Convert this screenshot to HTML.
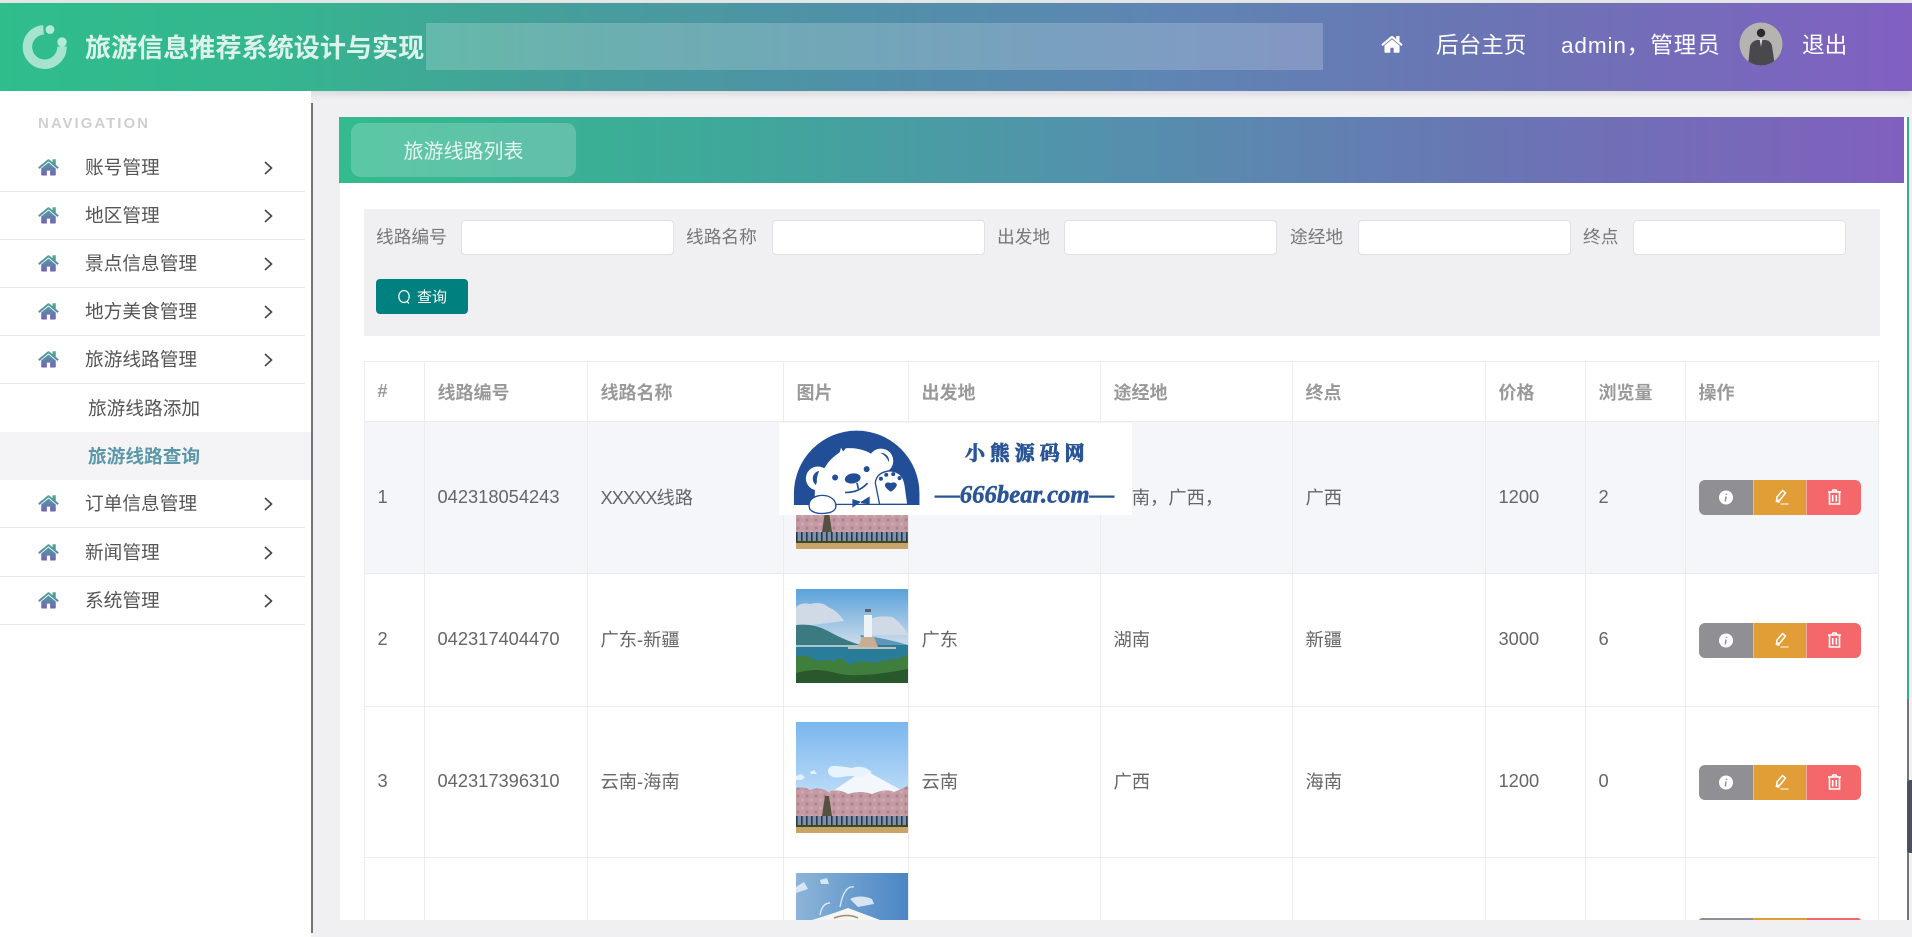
<!DOCTYPE html>
<html lang="zh-CN"><head><meta charset="utf-8"><title>旅游线路列表</title>
<style>
*{box-sizing:border-box}
html,body{margin:0;padding:0;width:1912px;height:937px;overflow:hidden;background:#f0f0f3;font-family:"Liberation Sans","Noto Sans CJK SC",sans-serif;color:#666}
.abs{position:absolute}
#hdr{position:absolute;left:0;top:3px;width:1912px;height:88px;background:linear-gradient(90deg,#2fbd8c 0%,#35b58f 15%,#45a09a 28%,#5090a8 45%,#5f84b4 62%,#6b74b4 78%,#8160c2 100%);box-shadow:0 3px 8px rgba(0,0,0,.1)}
#topline{position:absolute;left:0;top:0;width:1912px;height:3px;background:#e6e9e8}
#search{position:absolute;left:426px;top:23px;width:897px;height:47px;background:rgba(255,255,255,.2)}
.title{position:absolute;left:85px;top:30px;font-size:26.1px;line-height:36px;font-weight:700;color:#dcf3ec;white-space:nowrap}
.nav{position:absolute;top:28px;line-height:36px;font-size:22.6px;color:#fff;white-space:nowrap}
#side{position:absolute;left:0;top:91px;width:311px;height:846px;background:#fff}
#vline{position:absolute;left:311px;top:103px;width:2px;height:830px;background:#747478}
.navt{position:absolute;left:38px;top:116px;font-size:15px;line-height:16px;font-weight:700;letter-spacing:2px;color:#cfcfd2}
.mi{position:absolute;left:0;width:305px;height:48px;border-bottom:1px solid #e9e9ec;font-size:18.7px;line-height:48px;color:#555}
.mi span{position:absolute;left:85px;top:0;white-space:nowrap}
.mi svg.h{position:absolute;left:38px;top:15px}
.mi svg.c{position:absolute;left:264px;top:17px}
.sub{position:absolute;left:0;width:311px;height:48px;font-size:18.7px;line-height:48px;color:#555}
.sub span{position:absolute;left:88px;white-space:nowrap}
.sub.on{background:#f4f4f7;color:#5b97a9;font-weight:700;line-height:50px}
#card{position:absolute;left:340px;top:117px;width:1567px;height:803px;background:#fff;overflow:hidden}
#chead{position:absolute;left:339px;top:117px;width:1565px;height:66px;background:linear-gradient(90deg,#33bb8e 0%,#3fa89a 25%,#5490ad 50%,#6b74b4 75%,#8060be 100%)}
#tab{position:absolute;left:351px;top:123px;width:225px;height:54px;border-radius:10px;background:rgba(255,255,255,.2);color:#e4f6f0;font-size:20px;line-height:54px;text-align:center}
#tab span{position:relative;top:2px}
#green{position:absolute;left:1907px;top:117px;width:2px;height:582px;background:#35ad8a}
#gray{position:absolute;left:1907px;top:699px;width:2px;height:221px;background:#747478}
#thumb{position:absolute;left:1907px;top:780px;width:5px;height:73px;background:#4b5060;border-radius:3px 0 0 3px}
#filter{position:absolute;left:364px;top:209px;width:1516px;height:127px;background:#f0f0f2}
.lab{position:absolute;top:223px;font-size:17.7px;line-height:28px;color:#777;white-space:nowrap}
.inp{position:absolute;top:220px;width:213px;height:35px;background:#fff;border:1px solid #e0e0e4;border-radius:4px}
#btn{position:absolute;left:376px;top:279px;width:92px;height:35px;border-radius:4px;background:#00807f;color:#fff;font-size:15px;line-height:35px}
#btn span{position:absolute;left:41px;top:1px;white-space:nowrap}
#btn svg{position:absolute;left:21px;top:11px}
#twrap{position:absolute;left:364px;top:361px;width:1516px;height:559px;overflow:hidden}
table{border-collapse:collapse;table-layout:fixed;width:1514px;font-size:18.3px;color:#666}
th,td{border:1px solid #ececf0;padding:0 0 2px 12.5px;text-align:left;vertical-align:middle;white-space:nowrap}
th{height:60px;font-weight:700;color:#999;font-size:18px;padding:0 0 0 12.5px}
tr.r1 td{background:#f5f6fa}
td.img{padding-left:12px;padding-bottom:0;vertical-align:top}
td.img svg{display:block;margin-top:15px}
tr.r1 td.img svg{margin-top:16px}
.ops{display:flex;width:162px;height:35px;border-radius:6px;overflow:hidden;position:relative;top:1px}
.ops i{display:block;height:35px;position:relative}
.ops svg{position:absolute;left:0;top:0}
.o1{width:54px;background:#909094}.o2{width:54px;background:#e29e36;border-left:1px solid #eebd6e;border-right:1px solid #f5a8a0}.o3{width:54px;background:#f4686c}
tr.last td{height:63px;border-bottom:none;vertical-align:top;padding:0 0 0 12.5px}
tr.last td.img{padding-left:12px}
.opstop{display:flex;width:162px;height:3px;margin-top:60px;border-radius:6px 6px 0 0;overflow:hidden}
.opstop b{display:block;width:54px;height:3px}
#bottom{position:absolute;left:313px;top:920px;width:1599px;height:17px;background:#f0f0f3}
#wm{position:absolute;left:779px;top:423px;width:353px;height:92px;background:#fff}
</style></head><body>
<svg width="0" height="0" style="position:absolute"><defs>
<linearGradient id="hg" x1="0" y1="0" x2="0" y2="1"><stop offset="0" stop-color="#4aaa98"/><stop offset="1" stop-color="#7165b6"/></linearGradient>
<symbol id="home" viewBox="0 256 1664 1300"><path d="M1408 992v480q0 26-19 45t-45 19h-384v-384h-256v384h-384q-26 0-45-19t-19-45v-480q0-1 .5-3t.5-3l575-474 575 474q1 2 1 6zm223-69l-62 74q-8 9-21 11h-3q-13 0-21-7l-692-577-692 577q-12 8-24 7-13-2-21-11l-62-74q-8-10-7-23.500t11-21.500l719-599q32-26 76-26t76 26l244 204v-195q0-14 9-23t23-9h192q14 0 23 9t9 23v408l219 182q10 8 11 21.500t-7 23.500z"/></symbol>
<symbol id="chev" viewBox="0 0 9 14"><path d="M1 1l6.500 6-6.500 6" fill="none" stroke="#444" stroke-width="1.6"/></symbol>
<linearGradient id="sky1" x1="0" y1="0" x2="0" y2="1"><stop offset="0" stop-color="#7ab6ee"/><stop offset=".7" stop-color="#c0def8"/></linearGradient>
<linearGradient id="sky2" x1="0" y1="0" x2="0" y2="1"><stop offset="0" stop-color="#5aa2dc"/><stop offset=".55" stop-color="#c4d8e8"/></linearGradient>
<linearGradient id="sky3" x1="0" y1="0" x2="1" y2="0"><stop offset="0" stop-color="#8cb4d8"/><stop offset="1" stop-color="#4a86c4"/></linearGradient>
<pattern id="blot" width="9" height="8" patternUnits="userSpaceOnUse"><circle cx="2" cy="2" r="1.600" fill="#7e5e60" opacity=".35"/><circle cx="6.500" cy="6" r="1.300" fill="#e6c4cc" opacity=".45"/></pattern>
<pattern id="trunk" width="5" height="10" patternUnits="userSpaceOnUse"><rect width="5" height="10" fill="#7f90aa"/><rect width="1.600" height="10" fill="#26384a"/></pattern>
<symbol id="fuji" viewBox="0 0 112 111">
<rect width="112" height="111" fill="url(#sky1)"/>
<path d="M37 69L62 52Q70 46 76 52L107 69V76H37z" fill="#f3f6fb"/>
<path d="M32 50q0-7 8-6 10 1 16 2 10-4 20 4l-12 5q-10-2-18 0-12 2-14-5z" fill="#e9f3fc"/>
<path d="M0 54l5-2 4 3-3 3H0zM14 50l4-2 3 4h-6z" fill="#e4f0fb"/>
<path d="M20 72h92v8H20z" fill="#9eaacb" opacity=".7"/>
<path d="M0 66q8-2 14 2 10-4 18 2 10-4 20 2 12-4 24 0 14-6 22-2l14-6v40H0z" fill="#c49aa4"/>
<path d="M0 66q8-2 14 2 10-4 18 2 10-4 20 2 12-4 24 0 14-6 22-2l14-6v40H0z" fill="url(#blot)"/>
<path d="M26 94l3-20h4l3 20z" fill="#55503f"/>
<rect y="94" width="112" height="9" fill="url(#trunk)"/><rect y="103" width="112" height="2" fill="#3c4a1c"/>
<rect y="105" width="112" height="6" fill="#c9a468"/></symbol>
<symbol id="tower" viewBox="0 0 112 94">
<rect width="112" height="94" fill="url(#sky2)"/>
<path d="M0 18q6-5 14-3 12-3 18 3 10 4 16 14l-48 6zM74 30q10-4 22-2 10 6 16 18H74z" fill="#cfdae6"/>
<path d="M0 36q18-2 32 6t32 14H0z" fill="#3b7a80"/><path d="M64 46q20 2 48 10v2H70z" fill="#5d97bb"/>
<rect y="56" width="112" height="24" fill="#2a7d9a"/><rect y="56" width="70" height="2" fill="#a8c4cc"/>
<path d="M68 26h8v22h-8z" fill="#eef3f5"/><path d="M69 23h6v-3h-6z" fill="#5a5f6a"/><path d="M62 58l4-10h12l4 10z" fill="#c9ad92"/><path d="M52 58h48v2H52z" fill="#c3c1b6"/>
<path d="M0 68q10-4 20 4 10-2 18 0 8-6 14 4 14-6 26-2 14-4 24-4 6-4 10-4v32H0z" fill="#3f7e3c"/><path d="M0 84q20-6 40 0t72-4v14H0z" fill="#28582c"/></symbol>
<symbol id="tent" viewBox="0 0 112 47">
<rect width="112" height="47" fill="url(#sky3)"/>
<path d="M54 26q10-5 22 0l2 5-16 3zM0 14l8-5 4 7-12 4zM24 7l7-2 2 6h-8z" fill="#d7e6f2"/>
<path d="M24 42q2-12 10-12M44 34q4-22 14-20" fill="none" stroke="#d6e8f4" stroke-width="1.400"/>
<path d="M16 47Q36 41 52 35Q68 41 84 47z" fill="#f6f6f2"/><path d="M38 45q14-5 24 0" stroke="#a58878" stroke-width="1.500" fill="none"/></symbol>
<symbol id="info" viewBox="0 0 54 35"><circle cx="27" cy="17.500" r="7" fill="#fff"/><path d="M27.500 13.600v1.300M27 16.500l-.7 5" stroke="#909094" stroke-width="1.500" fill="none"/></symbol>
<symbol id="pen" viewBox="0 0 54 35"><path d="M23 17l5.500-6.500 3 2.500-5.500 7-3.500 1z" fill="none" stroke="#fff" stroke-width="1.500"/><path d="M22 21l3.500 1" stroke="#fff" stroke-width="2"/><path d="M26.500 24h8" stroke="#fff" stroke-width="1"/></symbol>
<symbol id="del" viewBox="0 0 54 35"><path d="M21 12h13M25 12l1-2h3l1 2M22.500 12.500v11.500h10v-11.500M25.700 15v6.500M29.300 15v6.500" fill="none" stroke="#fff" stroke-width="1.600"/></symbol>
</defs></svg>

<div id="topline"></div>
<div id="hdr"></div>
<div id="search"></div>
<svg class="abs" style="left:0;top:0" width="90" height="91"><path d="M62 46.500A17.300 17.300 0 1 1 43.500 29.700" fill="none" stroke="#a6e4cf" stroke-width="9.500"/><circle cx="62" cy="42" r="4.700" fill="#b4ead8"/><circle cx="50" cy="29.500" r="4.400" fill="#b4ead8"/></svg>
<div class="title">旅游信息推荐系统设计与实现</div>
<svg class="abs" style="left:1381px;top:36px" width="22" height="17" fill="#fff"><use href="#home"/></svg>
<div class="nav" style="left:1436px">后台主页</div>
<div class="nav" style="left:1561px;letter-spacing:.85px">admin，管理员</div>
<svg class="abs" style="left:1739px;top:22px" width="44" height="44" viewBox="0 0 44 44"><defs><clipPath id="av"><circle cx="22" cy="22" r="21.500"/></clipPath></defs><g clip-path="url(#av)"><rect width="44" height="44" fill="#b6b4b1"/><path d="M9 44l2-20q2-5 7-6h9q5 1 6 6l3 20z" fill="#49484c"/><circle cx="22" cy="11" r="4.200" fill="#2c2a2a"/><path d="M20.500 17h3l-1.500 8z" fill="#d8d6d2"/></g></svg>
<div class="nav" style="left:1802px">退出</div>

<div id="side"></div>
<div id="vline"></div>
<div class="navt">NAVIGATION</div>
<div class="mi" style="top:144px"><svg class="h" width="21" height="17" fill="url(#hg)"><use href="#home"/></svg><span>账号管理</span><svg class="c" width="9" height="14"><use href="#chev"/></svg></div>
<div class="mi" style="top:192px"><svg class="h" width="21" height="17" fill="url(#hg)"><use href="#home"/></svg><span>地区管理</span><svg class="c" width="9" height="14"><use href="#chev"/></svg></div>
<div class="mi" style="top:240px"><svg class="h" width="21" height="17" fill="url(#hg)"><use href="#home"/></svg><span>景点信息管理</span><svg class="c" width="9" height="14"><use href="#chev"/></svg></div>
<div class="mi" style="top:288px"><svg class="h" width="21" height="17" fill="url(#hg)"><use href="#home"/></svg><span>地方美食管理</span><svg class="c" width="9" height="14"><use href="#chev"/></svg></div>
<div class="mi" style="top:336px"><svg class="h" width="21" height="17" fill="url(#hg)"><use href="#home"/></svg><span>旅游线路管理</span><svg class="c" width="9" height="14"><use href="#chev"/></svg></div>
<div class="sub" style="top:385px"><span>旅游线路添加</span></div>
<div class="sub on" style="top:432px"><span>旅游线路查询</span></div>
<div class="mi" style="top:480px"><svg class="h" width="21" height="17" fill="url(#hg)"><use href="#home"/></svg><span>订单信息管理</span><svg class="c" width="9" height="14"><use href="#chev"/></svg></div>
<div class="mi" style="top:529px"><svg class="h" width="21" height="17" fill="url(#hg)"><use href="#home"/></svg><span>新闻管理</span><svg class="c" width="9" height="14"><use href="#chev"/></svg></div>
<div class="mi" style="top:577px"><svg class="h" width="21" height="17" fill="url(#hg)"><use href="#home"/></svg><span>系统管理</span><svg class="c" width="9" height="14"><use href="#chev"/></svg></div>

<div id="card"></div>
<div id="chead"></div>
<div id="tab"><span>旅游线路列表</span></div>
<div id="filter"></div>
<div class="lab" style="left:376px">线路编号</div><div class="inp" style="left:461px"></div>
<div class="lab" style="left:686px">线路名称</div><div class="inp" style="left:772px"></div>
<div class="lab" style="left:997px">出发地</div><div class="inp" style="left:1064px"></div>
<div class="lab" style="left:1290px">途经地</div><div class="inp" style="left:1358px"></div>
<div class="lab" style="left:1583px">终点</div><div class="inp" style="left:1633px"></div>
<div id="btn"><svg width="15" height="15" viewBox="0 0 15 15"><ellipse cx="7" cy="6.500" rx="5.200" ry="6" fill="none" stroke="#fff" stroke-width="1.200"/><path d="M10 11.500l2 2" stroke="#fff" stroke-width="1.200"/></svg><span>查询</span></div>

<div id="twrap"><table>
<colgroup><col style="width:60px"><col style="width:163px"><col style="width:196px"><col style="width:125px"><col style="width:192px"><col style="width:192px"><col style="width:193px"><col style="width:100px"><col style="width:100px"><col style="width:193px"></colgroup>
<tr><th>#</th><th>线路编号</th><th>线路名称</th><th>图片</th><th>出发地</th><th>途经地</th><th>终点</th><th>价格</th><th>浏览量</th><th>操作</th></tr>
<tr class="r1" style="height:152px"><td>1</td><td>042318054243</td><td><span style="letter-spacing:-1px">XXXXX</span>线路</td><td class="img"><svg width="112" height="111"><use href="#fuji"/></svg></td><td>云南</td><td>湖南，广西，</td><td>广西</td><td>1200</td><td>2</td><td><div class="ops"><i class="o1"><svg width="54" height="35"><use href="#info"/></svg></i><i class="o2"><svg width="54" height="35"><use href="#pen"/></svg></i><i class="o3"><svg width="54" height="35"><use href="#del"/></svg></i></div></td></tr>
<tr style="height:133px"><td>2</td><td>042317404470</td><td>广东-新疆</td><td class="img"><svg width="112" height="94"><use href="#tower"/></svg></td><td>广东</td><td>湖南</td><td>新疆</td><td>3000</td><td>6</td><td><div class="ops"><i class="o1"><svg width="54" height="35"><use href="#info"/></svg></i><i class="o2"><svg width="54" height="35"><use href="#pen"/></svg></i><i class="o3"><svg width="54" height="35"><use href="#del"/></svg></i></div></td></tr>
<tr style="height:151px"><td>3</td><td>042317396310</td><td>云南-海南</td><td class="img"><svg width="112" height="111"><use href="#fuji"/></svg></td><td>云南</td><td>广西</td><td>海南</td><td>1200</td><td>0</td><td><div class="ops"><i class="o1"><svg width="54" height="35"><use href="#info"/></svg></i><i class="o2"><svg width="54" height="35"><use href="#pen"/></svg></i><i class="o3"><svg width="54" height="35"><use href="#del"/></svg></i></div></td></tr>
<tr class="last"><td></td><td></td><td></td><td class="img"><svg width="112" height="47"><use href="#tent"/></svg></td><td></td><td></td><td></td><td></td><td></td><td><div class="opstop"><b style="background:#909094"></b><b style="background:#e29e36"></b><b style="background:#f4686c"></b></div></td></tr>
</table></div>

<div id="bottom"></div>
<div id="green"></div><div id="gray"></div><div id="thumb"></div>

<svg id="wm" viewBox="57 38 1059 277">
<path d="M100 285V250A189 189 0 0 1 478 250V285Z" fill="#214e97"/>
<circle cx="172" cy="205" r="36" fill="#fff"/><path d="M176 182a24 24 0 0 0-4 46q-8-20 4-46z" fill="#214e97"/>
<circle cx="362" cy="152" r="37" fill="#fff"/><path d="M360 128a24 24 0 0 1 26 28q-8-20-26-28z" fill="#214e97"/>
<path d="M166 283q-14-60 30-115 10-20 42-42l4-14 6 12 8-10q60-4 100 34 40 40 38 135z" fill="#fff"/>
<circle cx="224" cy="202" r="9" fill="#214e97"/><circle cx="319" cy="177" r="9" fill="#214e97"/>
<ellipse cx="277" cy="205" rx="24" ry="15" fill="#214e97" transform="rotate(-10 277 205)"/>
<path d="M254 247q40 2 68-28M290 218l4 18" fill="none" stroke="#214e97" stroke-width="5"/>
<path d="M358 283L345 218q4-32 44-36 40 2 46 44l8 57z" fill="#fff" stroke="#214e97" stroke-width="4"/>
<path d="M392 245q-20-12-18-22 6-10 18-4 12-6 18 4 0 10-18 22z" fill="#214e97"/>
<circle cx="362" cy="206" r="6" fill="#214e97"/><circle cx="378" cy="194" r="6" fill="#214e97"/><circle cx="399" cy="192" r="6" fill="#214e97"/><circle cx="418" cy="204" r="6" fill="#214e97"/>
<path d="M225 283H470" stroke="#214e97" stroke-width="4"/>
<path d="M302 275l-26-8v26zM302 275l26-16v24l-26-4z" fill="#214e97"/>
<path d="M148 298q-10-30 22-40 34-8 52 14 14 28-16 36-40 8-58-10z" fill="#fff" stroke="#214e97" stroke-width="4"/>
<text x="615" y="150" font-family="'Noto Serif CJK SC',serif" font-weight="700" font-size="60" fill="#2a5596" stroke="#2a5596" stroke-width="2.500" textLength="360">小熊源码网</text>
<text x="525" y="277" font-family="'Liberation Serif',serif" font-style="italic" font-weight="700" font-size="76" fill="#2a5596" stroke="#2a5596" stroke-width="1.500" textLength="540" lengthAdjust="spacingAndGlyphs">—666bear.com—</text>
</svg>
</body></html>
